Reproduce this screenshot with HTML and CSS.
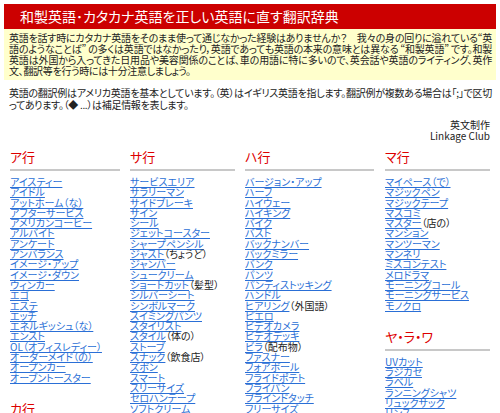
FILE: index.html
```html
<!DOCTYPE html>
<html lang="ja">
<head>
<meta charset="utf-8">
<title>和製英語･カタカナ英語を正しい英語に直す翻訳辞典</title>
<link rel="stylesheet" href="styles.css">
</head>
<body>
<div class="page">
  <h1 class="title">和製英語･カタカナ英語を正しい英語に直す翻訳辞典</h1>
  <div class="intro">英語を話す時にカタカナ英語をそのまま使って通じなかった経験はありませんか？　我々の身の回りに溢れている“英語のようなことば”<span class="qgap"></span>の多くは英語ではなかったり，英語であっても英語の本来の意味とは異なる<span class="qgap"></span>“和製英語”<span class="qgap"></span>です。和製英語は外国から入ってきた日用品や美容関係のことば、車の用語に特に多いので、英会話や英語のライティング、英作文、翻訳等を行う時には十分注意しましょう。</div>
  <p class="note">英語の翻訳例はアメリカ英語を基本としています。（英）はイギリス英語を指します。翻訳例が複数ある場合は「;」で区切ってあります。（◆ ...）は補足情報を表します。</p>
  <div class="credit">英文制作<br>Linkage Club</div>

  <div class="index">
    <div class="col">
      <section class="group">
        <h2 class="group-title">ア行</h2>
        <ul class="words">
          <li><a href="#">アイスティー</a></li>
          <li><a href="#">アイドル</a></li>
          <li><a href="#">アットホーム（な）</a></li>
          <li><a href="#">アフターサービス</a></li>
          <li><a href="#">アメリカンコーヒー</a></li>
          <li><a href="#">アルバイト</a></li>
          <li><a href="#">アンケート</a></li>
          <li><a href="#">アンバランス</a></li>
          <li><a href="#">イメージ・アップ</a></li>
          <li><a href="#">イメージ・ダウン</a></li>
          <li><a href="#">ウィンカー</a></li>
          <li><a href="#">エゴ</a></li>
          <li><a href="#">エステ</a></li>
          <li><a href="#">エッチ</a></li>
          <li><a href="#">エネルギッシュ（な）</a></li>
          <li><a href="#">エンスト</a></li>
          <li><a href="#">OL（オフィスレディー）</a></li>
          <li><a href="#">オーダーメイド（の）</a></li>
          <li><a href="#">オープンカー</a></li>
          <li><a href="#">オーブントースター</a></li>
        </ul>
      </section>
      <section class="group">
        <h2 class="group-title">カ行</h2>
        <ul class="words">
          <li><a href="#">カメラマン</a></li>
        </ul>
      </section>
    </div>

    <div class="col">
      <section class="group">
        <h2 class="group-title">サ行</h2>
        <ul class="words">
          <li><a href="#">サービスエリア</a></li>
          <li><a href="#">サラリーマン</a></li>
          <li><a href="#">サイドブレーキ</a></li>
          <li><a href="#">サイン</a></li>
          <li><a href="#">シール</a></li>
          <li><a href="#">ジェットコースター</a></li>
          <li><a href="#">シャープペンシル</a></li>
          <li><a href="#">ジャスト</a><span class="gloss">（ちょうど）</span></li>
          <li><a href="#">ジャンパー</a></li>
          <li><a href="#">シュークリーム</a></li>
          <li><a href="#">ショートカット</a><span class="gloss">（髪型）</span></li>
          <li><a href="#">シルバーシート</a></li>
          <li><a href="#">シンボルマーク</a></li>
          <li><a href="#">スイミングパンツ</a></li>
          <li><a href="#">スタイリスト</a></li>
          <li><a href="#">スタイル</a><span class="gloss">（体の）</span></li>
          <li><a href="#">ストーブ</a></li>
          <li><a href="#">スナック</a><span class="gloss">（飲食店）</span></li>
          <li><a href="#">ズボン</a></li>
          <li><a href="#">スマート</a></li>
          <li><a href="#">スリーサイズ</a></li>
          <li><a href="#">セロハンテープ</a></li>
          <li><a href="#">ソフトクリーム</a></li>
        </ul>
      </section>
    </div>

    <div class="col">
      <section class="group">
        <h2 class="group-title">ハ行</h2>
        <ul class="words">
          <li><a href="#">バージョン・アップ</a></li>
          <li><a href="#">ハーフ</a></li>
          <li><a href="#">ハイウェー</a></li>
          <li><a href="#">ハイキング</a></li>
          <li><a href="#">バイク</a></li>
          <li><a href="#">バスト</a></li>
          <li><a href="#">バックナンバー</a></li>
          <li><a href="#">バックミラー</a></li>
          <li><a href="#">バンク</a></li>
          <li><a href="#">パンツ</a></li>
          <li><a href="#">パンティストッキング</a></li>
          <li><a href="#">ハンドル</a></li>
          <li><a href="#">ヒアリング</a><span class="gloss">（外国語）</span></li>
          <li><a href="#">ピエロ</a></li>
          <li><a href="#">ビデオカメラ</a></li>
          <li><a href="#">ビデオデッキ</a></li>
          <li><a href="#">ビラ</a><span class="gloss">（配布物）</span></li>
          <li><a href="#">ファスナー</a></li>
          <li><a href="#">フォアボール</a></li>
          <li><a href="#">フライドポテト</a></li>
          <li><a href="#">フライパン</a></li>
          <li><a href="#">ブラインドタッチ</a></li>
          <li><a href="#">フリーサイズ</a></li>
        </ul>
      </section>
    </div>

    <div class="col">
      <section class="group">
        <h2 class="group-title">マ行</h2>
        <ul class="words">
          <li><a href="#">マイペース（で）</a></li>
          <li><a href="#">マジックペン</a></li>
          <li><a href="#">マジックテープ</a></li>
          <li><a href="#">マスコミ</a></li>
          <li><a href="#">マスター</a><span class="gloss">（店の）</span></li>
          <li><a href="#">マンション</a></li>
          <li><a href="#">マンツーマン</a></li>
          <li><a href="#">マンネリ</a></li>
          <li><a href="#">ミスコンテスト</a></li>
          <li><a href="#">メロドラマ</a></li>
          <li><a href="#">モーニングコール</a></li>
          <li><a href="#">モーニングサービス</a></li>
          <li><a href="#">モノクロ</a></li>
        </ul>
      </section>
      <section class="group">
        <h2 class="group-title">ヤ・ラ・ワ</h2>
        <ul class="words">
          <li><a href="#">UVカット</a></li>
          <li><a href="#">ラジカセ</a></li>
          <li><a href="#">ラベル</a></li>
          <li><a href="#">ランニングシャツ</a></li>
          <li><a href="#">リュックサック</a></li>
          <li><a href="#">リンス</a></li>
        </ul>
      </section>
    </div>
  </div>
</div>
</body>
</html>
```

FILE: styles.css
```css
html, body {
  margin: 0;
  padding: 0;
  background: #fff;
}

body {
  font-family: "Noto Sans CJK JP", "Noto Sans", sans-serif;
  font-size: 10px;
  color: #222;
  font-feature-settings: "palt";
}

.page {
  padding: 4px 4px 0;
}

/* red title band */
.title {
  margin: 0;
  height: 25px;
  padding-left: 16px;
  background: #cc0000;
  color: #fff;
  font-size: 14px;
  font-weight: normal;
  line-height: 25px;
  white-space: nowrap;
}

/* pale yellow lead box */
.intro {
  background: #ffffcc;
  padding: 3px 4px 4px 5px;
  line-height: 11px;
  letter-spacing: -0.3px;
  text-align: justify;
}

/* breathing room around the quoted terms */
.qgap {
  display: inline-block;
  width: 2px;
}

.note {
  margin: 7px 4px 0 5px;
  line-height: 11.5px;
  letter-spacing: -0.3px;
  text-align: justify;
}

.credit {
  margin: 8.5px 6px 0 0;
  text-align: right;
  line-height: 11px;
}

/* four-column word index */
.index {
  display: grid;
  grid-template-columns: 110px 105px 129px 106px;
  column-gap: 10px;
  margin: 8.5px 0 0 6px;
}

.index .col:last-child {
  margin-left: 1px;
}

.group + .group {
  margin-top: 18px;
}

.group-title {
  margin: 0;
  padding-bottom: 4px;
  border-bottom: 2px solid #c8c8c8;
  color: #dd0000;
  font-size: 13px;
  font-weight: normal;
  line-height: 16px;
}

.words {
  list-style: none;
  margin: 6px 0 0;
  padding: 0;
}

.words li {
  line-height: 10.3px;
  white-space: nowrap;
}

.words a {
  color: #2a6fd6;
  text-decoration: underline;
}

.gloss {
  color: #222;
}
```
